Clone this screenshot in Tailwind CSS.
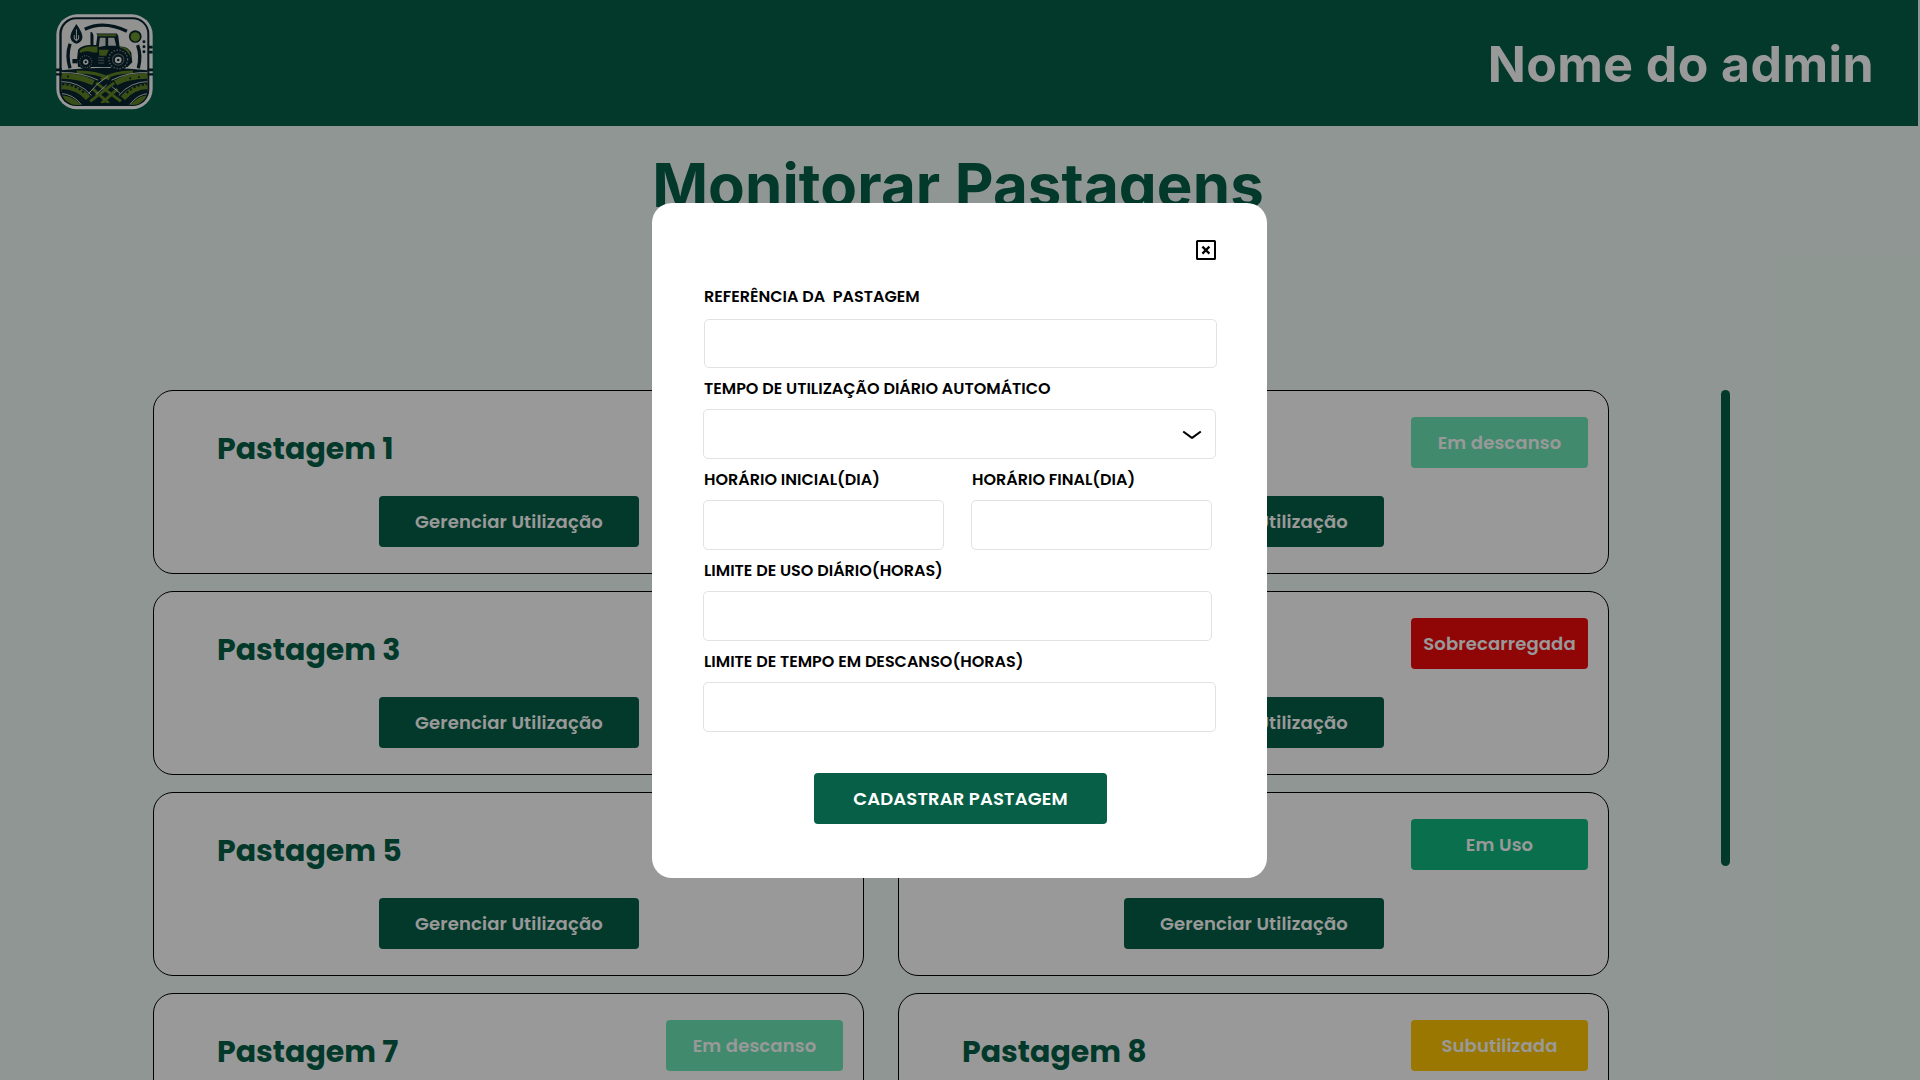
<!DOCTYPE html>
<html lang="pt-BR">
<head>
<meta charset="utf-8">
<title>Monitorar Pastagens</title>
<script src="https://cdn.jsdelivr.net/npm/@tailwindcss/browser@4"></script>
</head>
<body class="relative h-[1080px] w-[1920px] overflow-hidden bg-[#eefbf5] font-['Poppins','Inter',sans-serif]">

<div class="flex h-[1080px] flex-col overflow-hidden">
  <header class="flex h-[126px] w-[1918px] shrink-0 items-center justify-between bg-[#065f46] pr-11 pl-14">
    <svg class="-mt-0.5 h-24 w-[97px]" viewBox="48 42 290 290" preserveAspectRatio="none" fill="none">
      <defs>
        <clipPath id="frame"><rect x="65" y="53" width="256" height="264" rx="44"/></clipPath>
      </defs>
      <rect x="49" y="43" width="288" height="287" rx="62" fill="#fff"/>
      <rect x="58" y="52" width="269" height="268" rx="50" fill="#07232e"/>
      <rect x="65" y="58" width="256" height="256" rx="44" fill="#f4f4f2"/>
      <g clip-path="url(#frame)">
        <path d="M62 212Q190 196 326 212V320H62Z" fill="#07232e"/>
        <g stroke="#5f8424" stroke-width="17">
          <path d="M62 229Q118 228 160 250M62 260Q112 260 144 296M62 296Q92 296 116 322"/>
          <path d="M326 229Q262 228 226 250M326 260Q280 260 248 296M326 296Q300 296 276 322"/>
        </g>
        <g stroke="#5f8424" stroke-width="9">
          <path d="M110 217Q170 216 208 238M278 217Q224 216 182 240"/>
          <path d="M222 250L150 306M168 250L242 306M232 268L184 312M158 268L206 312"/>
        </g>
        <g stroke="#e6eae2" stroke-width="2.6">
          <path d="M62 219Q122 216 174 242M62 246Q118 246 154 288M62 282Q100 284 124 316"/>
          <path d="M326 219Q264 216 214 242M326 246Q270 246 236 288M326 282Q292 284 268 316"/>
          <path d="M204 230Q170 250 146 282M200 256L166 286M216 262L240 282"/>
        </g>
        <g stroke="#07232e" stroke-width="6" stroke-dasharray="7 6">
          <path d="M66 254Q106 254 134 282M324 254Q284 254 258 282"/>
        </g>
        <g fill="#07232e">
          <circle cx="84" cy="231" r="3"/><circle cx="118" cy="300" r="3.5"/><circle cx="270" cy="236" r="3"/><circle cx="296" cy="232" r="3"/><circle cx="278" cy="298" r="3"/>
        </g>
        <path d="M92 322Q196 300 300 322Z" fill="#07232e"/>
      </g>
      <path d="M134 88Q190 60 260 94M90 132Q78 168 90 206M292 136Q304 168 294 206" stroke="#07232e" stroke-width="10"/>
      <path d="M109 72Q91 98 91 111Q92 128 109 132Q127 128 127 111Q127 98 109 72Z" fill="#07232e"/>
      <path d="M109 88V124M103 106Q100 118 109 122Q119 118 115 106" stroke="#d8dcd8" stroke-width="3"/>
      <circle cx="285" cy="110" r="19" fill="#07232e"/>
      <circle cx="285" cy="111" r="14" fill="#6d9630"/>
      <g fill="#07232e">
        <circle cx="311" cy="126" r="4.5"/><circle cx="311" cy="141" r="4.5"/><circle cx="311" cy="156" r="4.5"/>
        <path d="M324 138H337V146H324ZM324 153H337V161H324ZM48 207H66V215H48ZM48 221H66V228H48ZM322 207H338V215H322ZM322 221H338V228H322Z"/>
      </g>
      <path d="M151 98Q150 95 156 97L160 106V136H151Z" fill="#07232e"/>
      <path d="M111 178L114 150Q124 138 146 136H168L172 105L168 101H230L234 108L238 140Q262 138 273 158L276 188L262 202H114Z" fill="#07232e"/>
      <path d="M119 152Q130 141 150 140H172V158H158Q138 150 119 160Z" fill="#5f8424"/>
      <path d="M174 103H227L229 109H174Z" fill="#5f8424"/>
      <path d="M179 114H196V138L176 142ZM204 114H222L228 138H204Z" fill="#cfd4d1"/>
      <path d="M176 150H206L198 168H178ZM240 142Q260 141 268 156L272 174Q260 148 238 148Z" fill="#5f8424"/>
      <path d="M174 174H192M174 182H192M174 190H192" stroke="#6c787b" stroke-width="3"/>
      <circle cx="137" cy="185" r="24" fill="#07232e"/>
      <circle cx="137" cy="186" r="18" stroke="#8d9798" stroke-width="3" stroke-dasharray="3 4"/>
      <circle cx="137" cy="187" r="8" fill="#e8ebe9"/><circle cx="137" cy="187" r="3.5" fill="#07232e"/>
      <circle cx="234" cy="178" r="34" fill="#07232e"/>
      <circle cx="234" cy="179" r="28" stroke="#8d9798" stroke-width="4" stroke-dasharray="4 5"/>
      <circle cx="234" cy="180" r="17" stroke="#6c787b" stroke-width="3"/>
      <circle cx="234" cy="181" r="10" fill="#f4f4f2"/><circle cx="234" cy="181" r="4" fill="#07232e"/>
      <path d="M97 178H112V191H97Z" fill="#07232e"/>
    </svg>
    <span class="pt-0.5 font-['Inter',sans-serif] text-[50px] leading-[60px] font-bold tracking-[0.42px] text-white">Nome do admin</span>
  </header>

  <h1 class="mt-[23px] w-[1916px] shrink-0 text-center font-['Inter',sans-serif] text-[60px] leading-[72px] font-bold tracking-[0.1px] text-[#065f46]">Monitorar Pastagens</h1>

  <main class="mt-[169px] flex items-start gap-28 pl-[153px]">
    <div class="grid w-[1456px] grid-cols-2 gap-x-[34px] gap-y-[17px]">
      <section class="flex h-[184px] flex-col rounded-[20px] border border-black bg-white pl-[63px] pr-5">
        <div class="flex h-[105px] items-start justify-between pt-[26px]">
          <h2 class="pt-[9px] text-[30px] leading-[45px] font-bold text-[#065f46]">Pastagem 1</h2>
        </div>
        <button class="ml-[162px] h-[51px] w-[260px] rounded bg-[#065f46] text-lg font-semibold tracking-[0.15px] text-white">Gerenciar Utilização</button>
      </section>
      <section class="flex h-[184px] flex-col rounded-[20px] border border-black bg-white pl-[63px] pr-5">
        <div class="flex h-[105px] items-start justify-between pt-[26px]">
          <h2 class="pt-[9px] text-[30px] leading-[45px] font-bold text-[#065f46]">Pastagem 2</h2>
          <span class="flex h-[51px] w-[177px] items-center justify-center rounded bg-[#6ee7b7] text-lg font-semibold tracking-[0.15px] text-white">Em descanso</span>
        </div>
        <button class="ml-[162px] h-[51px] w-[260px] rounded bg-[#065f46] text-lg font-semibold tracking-[0.15px] text-white">Gerenciar Utilização</button>
      </section>
      <section class="flex h-[184px] flex-col rounded-[20px] border border-black bg-white pl-[63px] pr-5">
        <div class="flex h-[105px] items-start justify-between pt-[26px]">
          <h2 class="pt-[9px] text-[30px] leading-[45px] font-bold text-[#065f46]">Pastagem 3</h2>
        </div>
        <button class="ml-[162px] h-[51px] w-[260px] rounded bg-[#065f46] text-lg font-semibold tracking-[0.15px] text-white">Gerenciar Utilização</button>
      </section>
      <section class="flex h-[184px] flex-col rounded-[20px] border border-black bg-white pl-[63px] pr-5">
        <div class="flex h-[105px] items-start justify-between pt-[26px]">
          <h2 class="pt-[9px] text-[30px] leading-[45px] font-bold text-[#065f46]">Pastagem 4</h2>
          <span class="flex h-[51px] w-[177px] items-center justify-center rounded bg-[#f00a0a] text-lg font-semibold tracking-[0.15px] text-white">Sobrecarregada</span>
        </div>
        <button class="ml-[162px] h-[51px] w-[260px] rounded bg-[#065f46] text-lg font-semibold tracking-[0.15px] text-white">Gerenciar Utilização</button>
      </section>
      <section class="flex h-[184px] flex-col rounded-[20px] border border-black bg-white pl-[63px] pr-5">
        <div class="flex h-[105px] items-start justify-between pt-[26px]">
          <h2 class="pt-[9px] text-[30px] leading-[45px] font-bold text-[#065f46]">Pastagem 5</h2>
        </div>
        <button class="ml-[162px] h-[51px] w-[260px] rounded bg-[#065f46] text-lg font-semibold tracking-[0.15px] text-white">Gerenciar Utilização</button>
      </section>
      <section class="flex h-[184px] flex-col rounded-[20px] border border-black bg-white pl-[63px] pr-5">
        <div class="flex h-[105px] items-start justify-between pt-[26px]">
          <h2 class="pt-[9px] text-[30px] leading-[45px] font-bold text-[#065f46]">Pastagem 6</h2>
          <span class="flex h-[51px] w-[177px] items-center justify-center rounded bg-[#10b981] text-lg font-semibold tracking-[0.15px] text-white">Em Uso</span>
        </div>
        <button class="ml-[162px] h-[51px] w-[260px] rounded bg-[#065f46] text-lg font-semibold tracking-[0.15px] text-white">Gerenciar Utilização</button>
      </section>
      <section class="flex h-[184px] flex-col rounded-[20px] border border-black bg-white pl-[63px] pr-5">
        <div class="flex h-[105px] items-start justify-between pt-[26px]">
          <h2 class="pt-[9px] text-[30px] leading-[45px] font-bold text-[#065f46]">Pastagem 7</h2>
          <span class="flex h-[51px] w-[177px] items-center justify-center rounded bg-[#6ee7b7] text-lg font-semibold tracking-[0.15px] text-white">Em descanso</span>
        </div>
      </section>
      <section class="flex h-[184px] flex-col rounded-[20px] border border-black bg-white pl-[63px] pr-5">
        <div class="flex h-[105px] items-start justify-between pt-[26px]">
          <h2 class="pt-[9px] text-[30px] leading-[45px] font-bold text-[#065f46]">Pastagem 8</h2>
          <span class="flex h-[51px] w-[177px] items-center justify-center rounded bg-[#ffc700] text-lg font-semibold tracking-[0.15px] text-white">Subutilizada</span>
        </div>
      </section>
    </div>
    <div class="h-[476px] w-[9px] rounded-full bg-[#065f46]"></div>
  </main>
</div>

<!-- Dimmed backdrop and registration dialog -->
<div class="absolute inset-0 bg-black/40 pt-[203px] pl-[652px]">
  <form class="flex h-[675px] w-[615px] flex-col rounded-[20px] bg-white pt-[37px] pl-[51px] text-base leading-6 font-semibold text-black">
    <svg class="ml-[493px] size-5 shrink-0" viewBox="0 0 20 20" fill="none" stroke="#000" stroke-width="2">
      <rect x="1" y="1" width="18" height="18" rx="0.6"/>
      <path d="M6.4 6.6L13.4 13.6M13.4 6.6L6.4 13.6" stroke-width="2.2"/>
    </svg>
    <label class="mt-[25px] ml-px whitespace-pre">REFERÊNCIA DA  PASTAGEM</label>
    <div class="mt-2.5 ml-px h-[49px] w-[513px] shrink-0 rounded-[5px] border border-[#e2e2e2]"></div>
    <label class="mt-[9px] ml-px">TEMPO DE UTILIZAÇÃO DIÁRIO AUTOMÁTICO</label>
    <div class="mt-2 flex h-[50px] w-[513px] shrink-0 items-center justify-end rounded-[5px] border border-[#e2e2e2] pr-[13px]">
      <svg class="mt-px h-2.5 w-5" viewBox="0 0 20 10" fill="none" stroke="#000" stroke-width="2"><path d="M1.2 1.5L9.2 7.4Q10 8 10.8 7.4L18.8 1.5"/></svg>
    </div>
    <div class="mt-[9px] flex gap-[27px]">
      <div class="w-[241px]">
        <label class="ml-px block">HORÁRIO INICIAL(DIA)</label>
        <div class="mt-2 h-[50px] rounded-[5px] border border-[#e2e2e2]"></div>
      </div>
      <div class="w-[241px]">
        <label class="ml-px block">HORÁRIO FINAL(DIA)</label>
        <div class="mt-2 h-[50px] rounded-[5px] border border-[#e2e2e2]"></div>
      </div>
    </div>
    <label class="mt-[9px] ml-px">LIMITE DE USO DIÁRIO(HORAS)</label>
    <div class="mt-2 h-[50px] w-[509px] shrink-0 rounded-[5px] border border-[#e2e2e2]"></div>
    <label class="mt-[9px] ml-px">LIMITE DE TEMPO EM DESCANSO(HORAS)</label>
    <div class="mt-2 h-[50px] w-[513px] shrink-0 rounded-[5px] border border-[#e2e2e2]"></div>
    <button class="mt-[41px] ml-[111px] h-[51px] w-[293px] shrink-0 rounded bg-[#065f46] text-lg font-semibold tracking-[0.15px] text-white">CADASTRAR PASTAGEM</button>
  </form>
</div>
</body>
</html>
